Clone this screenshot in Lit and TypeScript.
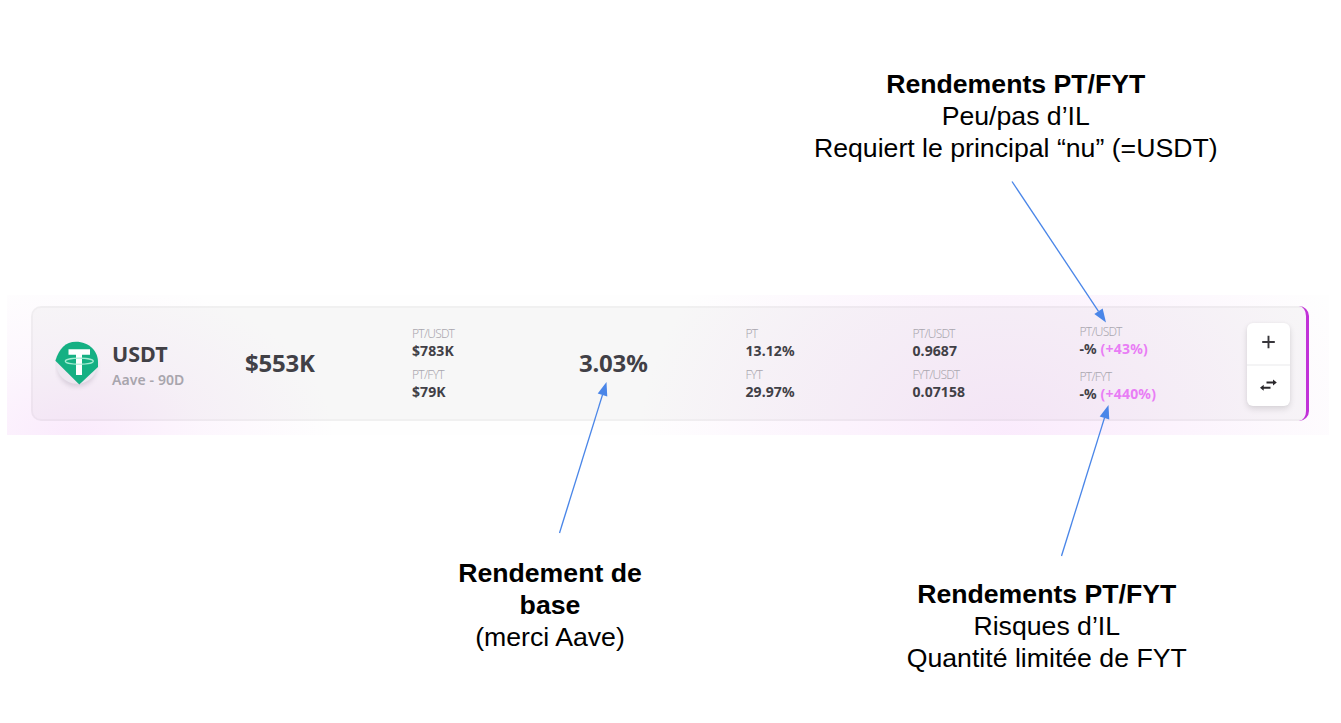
import { LitElement, html, css, svg } from "lit";
import { customElement, property } from "lit/decorators.js";

interface Entry { label: string; value: string; bonus?: string }

@customElement("metric-pair")
class MetricPair extends LitElement {
  @property({ attribute: false }) entries: Entry[] = [];
  @property({ type: Boolean, reflect: true }) spaced = false;
  static styles = css`
    :host { display: flex; flex-direction: column; gap: 5px; padding-bottom: 1px; }
    :host([spaced]) { gap: 9px; padding-bottom: 1px; }
    .item { display: flex; flex-direction: column; gap: 0; }
    .label { font-size: 12px; line-height: 17px; height: 16px; font-weight: 300; color: #aaa7af; letter-spacing: -0.75px; white-space: nowrap; }
    .value { font-size: 14px; line-height: 19px; height: 20px; font-weight: 700; color: #414046; white-space: nowrap; letter-spacing: 0.1px; }
    .bonus { color: #e97df5; letter-spacing: 0.2px; }
  `;
  render() {
    return this.entries.map(e => html`<div class="item"><div class="label">${e.label}</div>
      <div class="value">${e.value}${e.bonus ? html` <span class="bonus">${e.bonus}</span>` : ""}</div></div>`);
  }
}

@customElement("future-card")
class FutureCard extends LitElement {
  static styles = css`
    :host { display: block; font-family: "Noto Sans", "Open Sans", sans-serif; }
    .card { position: relative; box-sizing: border-box; height: 115px; display: grid; grid-template-columns: 190px 167px 167px 166.5px 167px 167px 167px 43px; align-items: center; padding-left: 22px; border: 2px solid rgba(0,0,0,.055); border-right: 3px solid transparent; border-radius: 10px; background: rgba(35,35,40,.032); background-clip: padding-box; }
    .card::after { content: ""; position: absolute; top: -2px; bottom: -2px; right: -3px; width: 20px; border-right: 3px solid #c132d8; border-radius: 0 10px 10px 0; pointer-events: none; }
    .asset { display: flex; align-items: center; gap: 7px; }
    .logo { width: 50px; height: 56px; margin-top: 4px; }
    .title { padding-top: 5px; }
    .name { font-size: 21.5px; line-height: 26px; font-weight: 700; color: #414046; }
    .term { font-size: 14px; line-height: 25px; font-weight: 600; color: #a8a5ad; letter-spacing: 0.1px; }
    .big { font-size: 24px; line-height: 32px; font-weight: 700; color: #414046; letter-spacing: -0.2px; padding-bottom: 2px; }
    .actions { height: 83px; border-radius: 6px; background: #fff; display: flex; flex-direction: column; box-shadow: 0 3px 6px rgba(0,0,0,.12), 0 0 3px rgba(0,0,0,.04); margin-top: 2px; }
    .action { flex: 1; display: flex; align-items: center; justify-content: center; padding-bottom: 2px; }
    .action + .action { border-top: 2px solid #f4f4f5; }
  `;
  render() {
    return html`<div class="card">
      <div class="asset">
        <svg class="logo" viewBox="0 0 50 56">
          <defs><filter id="soft" x="-30%" y="-30%" width="160%" height="160%"><feGaussianBlur stdDeviation="2.2"/></filter></defs>
          <circle cx="22" cy="29" r="20" fill="#7d6f86" opacity=".22" filter="url(#soft)"/>
          <circle cx="22" cy="25" r="20.800" fill="#ece7f0"/>
          <path d="M.4 22.700C4 10.500 10.500 3.700 21 3.700C34 3.700 43 13 43 24V29L24.300 46.500Z" fill="#15b083"/>
          <path d="M13.500 11.300H35V16.700H27V37H21V16.700H13.500Z" fill="#fff"/>
          <ellipse cx="24.300" cy="23.200" rx="14" ry="3" fill="none" stroke="#a5ecd2" stroke-width="1.200"/>
          <path d="M21 21H27V25.300H21Z" fill="#fff"/>
        </svg>
        <div class="title"><div class="name">USDT</div><div class="term">Aave - 90D</div></div>
      </div>
      <div class="big">$553K</div>
      <metric-pair .entries=${[{ label: "PT/USDT", value: "$783K" }, { label: "PT/FYT", value: "$79K" }]}></metric-pair>
      <div class="big">3.03%</div>
      <metric-pair .entries=${[{ label: "PT", value: "13.12%" }, { label: "FYT", value: "29.97%" }]}></metric-pair>
      <metric-pair .entries=${[{ label: "PT/USDT", value: "0.9687" }, { label: "FYT/USDT", value: "0.07158" }]}></metric-pair>
      <metric-pair spaced .entries=${[{ label: "PT/USDT", value: "-%", bonus: "(+43%)" }, { label: "PT/FYT", value: "-%", bonus: "(+440%)" }]}></metric-pair>
      <div class="actions">
        <div class="action"><svg width="20" height="20" viewBox="0 0 20 20"><path d="M10.500 3.700V16.300M4.200 10H16.800" stroke="#38363b" stroke-width="1.900"/></svg></div>
        <div class="action"><svg width="20" height="20" viewBox="0 0 20 20"><path d="M8.500 7.500H16M12.500 12.800H5" stroke="#29272b" stroke-width="1.900"/><path d="M15 4.500L18.800 7.500L15 10.500ZM5.700 9.800L2 12.800L5.700 15.800Z" fill="#29272b"/></svg></div>
      </div>
    </div>`;
  }
}

const arrows = [
  { from: [1012, 181.5], to: [1106, 322.5] },
  { from: [559.5, 533], to: [606.5, 382] },
  { from: [1061.5, 556], to: [1108.5, 405] },
];

@customElement("app-root")
class AppRoot extends LitElement {
  static styles = css`
    :host { display: block; }
    .slide { position: relative; box-sizing: border-box; width: 1341px; height: 723px; background: #fff; overflow: hidden; display: grid; grid-template-rows: 295px 140px 288px; font-family: "Liberation Sans", Arial, sans-serif; }
    .above { padding: 68px 0 0 690.5px; }
    .band { margin: 0 12px 0 7px; padding: 11px 20px 14px 24px; background: radial-gradient(260px 165px at 68px 145px, rgba(240,180,248,.27), rgba(240,180,248,.1) 50%, transparent), radial-gradient(370px 290px at 1000px 150px, rgba(240,180,248,.26), rgba(240,180,248,.12) 55%, transparent), #fefefe; }
    .below { display: grid; grid-template-columns: 250px 343px; column-gap: 200px; padding-left: 425px; align-items: start; }
    .note { text-align: center; font-size: 26.667px; line-height: 32px; color: #000; }
    .first { padding-top: 122px; }
    .second { padding: 143px 0 0 0.5px; }
    .arrows { position: absolute; left: 0; top: 0; pointer-events: none; }
  `;
  render() {
    return html`<div class="slide">
      <div class="above"><div class="note"><b>Rendements PT/FYT</b><br>Peu/pas d’IL<br>Requiert le principal “nu” (=USDT)</div></div>
      <div class="band"><future-card></future-card></div>
      <div class="below">
        <div class="note first"><b>Rendement de<br>base</b><br>(merci Aave)</div>
        <div class="note second"><b>Rendements PT/FYT</b><br>Risques d’IL<br>Quantité limitée de FYT</div>
      </div>
      <svg class="arrows" width="1341" height="723" viewBox="0 0 1341 723">
        ${arrows.map(({ from: [x1, y1], to: [x2, y2] }) => {
          const len = Math.hypot(x2 - x1, y2 - y1);
          const ux = (x2 - x1) / len, uy = (y2 - y1) / len;
          const bx = x2 - ux * 13.5, by = y2 - uy * 13.5;
          const head = `${x2},${y2} ${bx - uy * 5},${by + ux * 5} ${bx + uy * 5},${by - ux * 5}`;
          return svg`<line x1=${x1} y1=${y1} x2=${bx} y2=${by} stroke="#4a86e8" stroke-width="1.333"/><polygon points=${head} fill="#4a86e8"/>`;
        })}
      </svg>
    </div>`;
  }
}
